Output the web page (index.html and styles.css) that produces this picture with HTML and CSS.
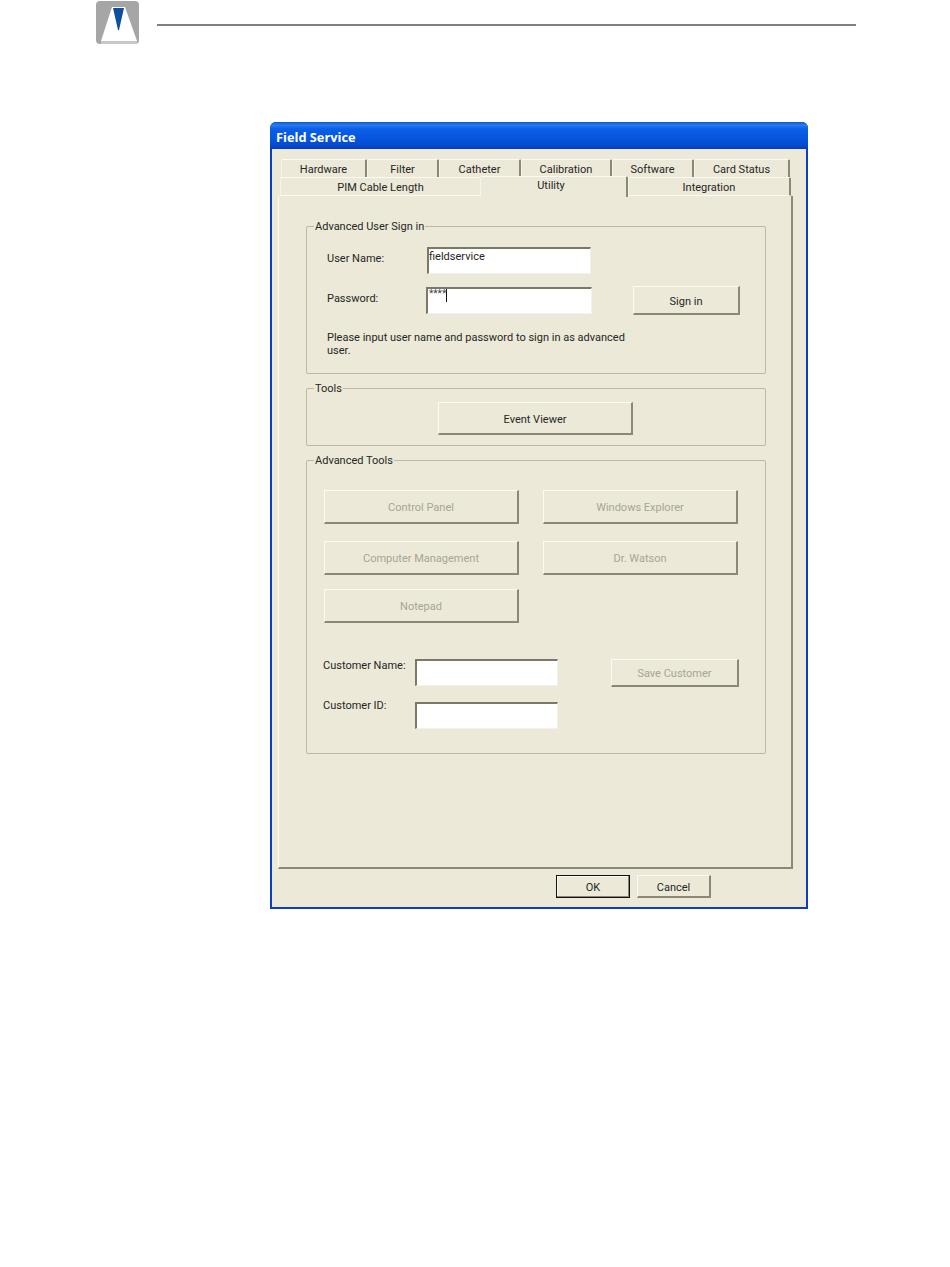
FILE: index.html
```html
<!DOCTYPE html>
<html lang="en">
<head>
<meta charset="utf-8">
<title>Field Service</title>
<link rel="stylesheet" href="styles.css">
</head>
<body>
<header class="page-head">
  <svg class="mark" width="44" height="45" viewBox="0 0 44 45" aria-hidden="true">
    <rect x="0" y="1" width="43" height="43" rx="4" fill="#a6a6a6"/>
    <polygon points="16,7 29,7 41,41 5,41" fill="#fff"/>
    <rect x="5" y="41" width="36" height="3" fill="#c8c8c8"/>
    <polygon points="17,8 28,8 23,30 22,30" fill="#0f4f9c"/>
  </svg>
  <div class="rule"></div>
</header>
<main class="dialog">
  <div class="titlebar">Field Service</div>
  <div class="client">
    <div class="tabs">
      <div class="tab-row row-top">
        <div class="tab t-hw">Hardware</div>
        <div class="tab t-fi">Filter</div>
        <div class="tab t-ca">Catheter</div>
        <div class="tab t-cb">Calibration</div>
        <div class="tab t-sw">Software</div>
        <div class="tab t-cs">Card Status</div>
      </div>
      <div class="tab-row row-bottom">
        <div class="tab t-pim">PIM Cable Length</div>
        <div class="tab t-ut active">Utility</div>
        <div class="tab t-in">Integration</div>
      </div>
    </div>
    <div class="panel">
      <fieldset class="group g-sign">
        <legend>Advanced User Sign in</legend>
        <div class="sign-grid">
          <label class="lbl l-user">User Name:</label>
          <div class="field f-user">fieldservice</div>
          <label class="lbl l-pass">Password:</label>
          <div class="field f-pass"><span class="stars">****</span><span class="caret"></span></div>
          <button class="btn b-sign">Sign in</button>
        </div>
        <p class="hint">Please input user name and password to sign in as advanced user.</p>
      </fieldset>
      <fieldset class="group g-tools">
        <legend>Tools</legend>
        <button class="btn b-event">Event Viewer</button>
      </fieldset>
      <fieldset class="group g-adv">
        <legend>Advanced Tools</legend>
        <div class="adv-grid">
          <button class="btn big off">Control Panel</button>
          <button class="btn big off">Windows Explorer</button>
          <button class="btn big off">Computer Management</button>
          <button class="btn big off">Dr. Watson</button>
          <button class="btn big off">Notepad</button>
        </div>
        <div class="cust">
          <label class="lbl l-cn">Customer Name:</label>
          <div class="field f-cust f-cn"></div>
          <button class="btn b-save off">Save Customer</button>
          <label class="lbl l-ci">Customer ID:</label>
          <div class="field f-cust f-ci"></div>
        </div>
      </fieldset>
    </div>
    <div class="actions">
      <button class="btn b-act b-ok">OK</button>
      <button class="btn b-act">Cancel</button>
    </div>
  </div>
</main>
</body>
</html>
```
FILE: styles.css
```css
* { box-sizing: border-box; }
html, body { margin: 0; padding: 0; background: #fff; }
body {
  width: 950px;
  height: 1267px;
  overflow: hidden;
  font-family: Roboto, "Liberation Sans", Arial, sans-serif;
  font-size: 11px;
  color: #262626;
}
.page-head {
  display: flex;
  align-items: flex-start;
  padding-left: 96px;
  height: 122px;
}
.mark { display: block; }
.rule {
  width: 699px;
  height: 2px;
  margin: 24px 0 0 17px;
  background: #808080;
}
.dialog {
  width: 538px;
  height: 787px;
  margin-left: 270px;
  background: #0a3fc4;
  padding: 0 2px 2px 2px;
  border-radius: 6px 6px 0 0;
  display: flex;
  flex-direction: column;
}
.titlebar {
  height: 27px;
  margin: 0 -2px;
  padding: 7px 0 0 6px;
  border-radius: 6px 6px 0 0;
  background: linear-gradient(#0a55d8 0, #2a7cf0 3px, #0b5fe6 7px, #0553dc 18px, #0546c8 25px, #0a3ab0 27px);
  color: #fff;
  font-family: "Open Sans", "Liberation Sans", sans-serif;
  font-weight: 700;
  font-size: 12.8px;
  line-height: 16px;
}
.client {
  flex: 1;
  background: #ece9d8;
  padding: 10px 0 0 6px;
}
.tabs { margin-left: 2px; }
.tab-row { display: flex; }
.row-top { margin-left: 1px; height: 18px; }
.row-bottom { height: 19px; }
.tab {
  text-align: center;
  border-top: 1px solid #fbfaf5;
  border-left: 1px solid #f6f4ea;
  border-right: 2px solid #8b8878;
  border-radius: 2px 2px 0 0;
  background: #ece9d8;
  line-height: 20px;
}
.row-bottom .tab { border-bottom: 1px solid #fbfaf5; }
.t-hw { width: 86px; }
.t-fi { width: 72px; }
.t-ca { width: 82px; }
.t-cb { width: 91px; }
.t-sw { width: 82px; }
.t-cs { width: 96px; }
.t-pim { width: 200px; border-right: 0; }
.t-ut { width: 148px; padding-right: 5px; }
.t-in { width: 163px; }
.tab.active {
  height: 21px;
  margin-top: -1px;
  border-bottom: 0;
  line-height: 18px;
  position: relative;
  z-index: 1;
}
.panel {
  width: 515px;
  height: 673px;
  border-left: 1px solid #fbfaf5;
  border-right: 2px solid #8b8878;
  border-bottom: 2px solid #8b8878;
  padding: 23px 26px 0 27px;
}
.group {
  margin: 0;
  padding: 0;
  width: 460px;
  border: 1px solid #bcb9a6;
  border-radius: 2px;
  min-inline-size: 0;
}
.group legend {
  margin-left: 7px;
  padding: 0 1px;
  height: 14px;
  line-height: 16px;
}
.g-sign { height: 155px; }
.g-tools { height: 65px; margin-top: 7px; }
.g-adv { height: 301px; margin-top: 7px; }
.sign-grid {
  display: grid;
  grid-template-columns: 99px 166px 107px;
  grid-template-rows: 27px 27px;
  row-gap: 13px;
  padding: 14px 0 0 20px;
}
.lbl { line-height: 14px; }
.l-user { grid-column: 1; grid-row: 1; padding-top: 5px; }
.l-pass { grid-column: 1; grid-row: 2; padding-top: 5px; }
.field {
  background: #fff;
  border-top: 2px solid #7b7868;
  border-left: 2px solid #7b7868;
  border-right: 1px solid #f4f2e8;
  border-bottom: 1px solid #f4f2e8;
  line-height: 16px;
  height: 27px;
}
.f-user { grid-column: 2; grid-row: 1; width: 164px; margin-left: 1px; }
.f-pass { grid-column: 2; grid-row: 2; width: 166px; display: flex; align-items: flex-start; padding-left: 1px; }
.stars { font-size: 10px; line-height: 9px; color: #444; }
.caret { display: block; width: 1px; height: 13px; background: #111; }
.btn {
  display: block;
  font: inherit;
  color: inherit;
  padding: 2px 0 0;
  background: #ece9d8;
  border-top: 1px solid #fbfaf5;
  border-left: 1px solid #fbfaf5;
  border-right: 2px solid #8b8878;
  border-bottom: 2px solid #8b8878;
}
.b-sign { grid-column: 3; grid-row: 2; width: 107px; height: 29px; margin: -1px 0 0 41px; }
.hint { margin: 17px 0 0 20px; width: 300px; line-height: 13px; }
.b-event { width: 195px; height: 33px; margin: 7px 0 0 131px; }
.adv-grid {
  display: grid;
  grid-template-columns: 195px 195px;
  column-gap: 24px;
  grid-template-rows: 51px 48px 34px;
  padding: 23px 0 0 17px;
}
.big { width: 195px; height: 34px; }
.off { color: #a7a596; }
.cust {
  display: grid;
  grid-template-columns: 91px 143px 53px 128px;
  grid-template-rows: 27px 27px;
  row-gap: 16px;
  padding: 36px 0 0 17px;
}
.l-cn { grid-column: 1; grid-row: 1; margin: 0 0 0 -1px; }
.l-ci { grid-column: 1; grid-row: 2; margin: -3px 0 0 -1px; }
.f-cust { width: 143px; grid-column: 2; }
.f-cn { grid-row: 1; }
.f-ci { grid-row: 2; }
.b-save { grid-column: 4; grid-row: 1; width: 128px; height: 28px; }
.actions {
  display: flex;
  gap: 7px;
  padding: 6px 0 0 278px;
}
.b-act { width: 74px; height: 23px; }
.b-ok { border: 1px solid #111; box-shadow: inset -1px -1px 0 #8b8878, inset 1px 1px 0 #fbfaf5; }
```
